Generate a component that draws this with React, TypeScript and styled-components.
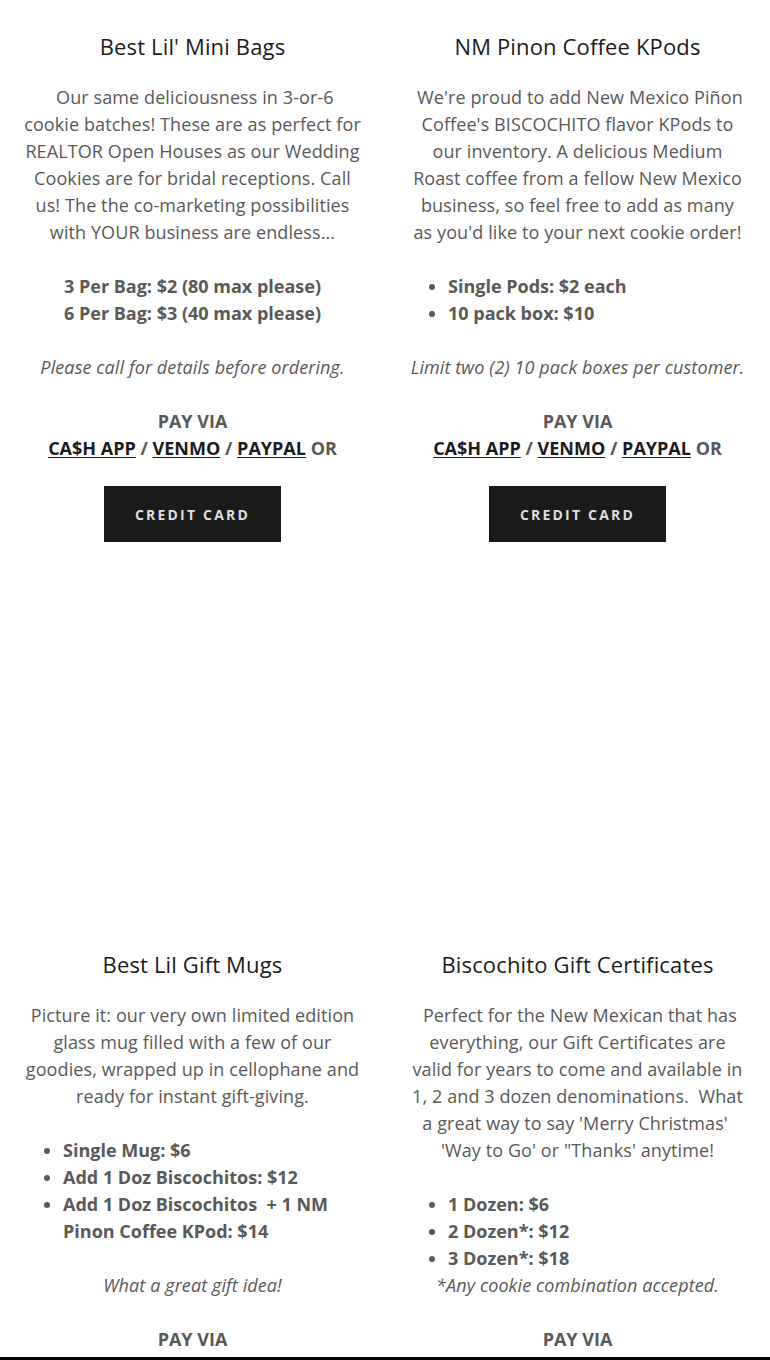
import styled, { createGlobalStyle } from "styled-components";

const GlobalStyle = createGlobalStyle`
  html, body {
    margin: 0;
    padding: 0;
    background: #fff;
  }
  body {
    font-family: "Open Sans", "Noto Sans", sans-serif;
    -webkit-font-smoothing: antialiased;
  }
`;

const Page = styled.div`
  width: 770px;
  height: 1360px;
  display: flex;
  flex-direction: column;
  overflow: hidden;
`;

const Viewport = styled.div`
  flex: 1 1 auto;
  min-height: 0;
  overflow: hidden;
`;

const Grid = styled.div`
  display: grid;
  grid-template-columns: 385px 385px;
  align-items: start;
`;

const Card = styled.section`
  display: flex;
  flex-direction: column;
  align-items: center;
  padding: 32px 20px 48px 20px;
  box-sizing: border-box;
  text-align: center;
`;

const Media = styled.div<{ $height: number }>`
  align-self: stretch;
  height: ${({ $height }) => $height}px;
  background: #fff;
`;

const Title = styled.h4`
  margin: 0;
  color: #1b1b1b;
  font-size: 22px;
  font-weight: 400;
  line-height: 28px;
  letter-spacing: 0.15px;
`;

const Body = styled.div`
  margin-top: 24px;
  color: #595959;
  font-size: 18px;
  line-height: 27px;
  letter-spacing: 0.1px;
  align-self: stretch;

  & > p {
    margin: 0 0 27px 0;
  }
  & > p:last-child {
    margin-bottom: 0;
  }
`;

const Bold = styled.p`
  font-weight: 700;
  letter-spacing: 0;
`;

const Note = styled.p`
  font-style: italic;
`;

const PriceList = styled.ul<{ $tight?: boolean }>`
  margin: 0 0 ${({ $tight }) => ($tight ? 0 : 27)}px 0;
  padding-left: 43px;
  text-align: left;
  font-weight: 700;
  letter-spacing: 0;
`;

const PayVia = styled.p`
  font-weight: 700;
  text-transform: uppercase;
  letter-spacing: 0;
`;

const PayLink = styled.a`
  color: #1b1b1b;
  text-decoration: underline;
  text-underline-offset: 2px;
`;

const Button = styled.a`
  margin-top: 24px;
  display: inline-flex;
  align-items: center;
  justify-content: center;
  width: 177px;
  height: 56px;
  box-sizing: border-box;
  background: #1b1b1b;
  color: #dedede;
  font-size: 14px;
  font-weight: 700;
  letter-spacing: 2.2px;
  text-transform: uppercase;
  text-decoration: none;
`;

const Footer = styled.div`
  height: 3px;
  flex: 0 0 3px;
  background: #000;
`;

const Pay = () => (
  <PayVia>
    Pay via
    <br />
    <PayLink href="#">CA$H APP</PayLink> / <PayLink href="#">VENMO</PayLink> /{" "}
    <PayLink href="#">PAYPAL</PayLink> OR
  </PayVia>
);

export default function App() {
  return (
    <>
      <GlobalStyle />
      <Page>
        <Viewport>
          <Grid>
            <Card>
              <Title>Best Lil' Mini Bags</Title>
              <Body>
                <p>
                  &nbsp;Our same deliciousness in 3-or-6
                  <br />
                  cookie batches! These are as perfect for
                  <br />
                  REALTOR Open Houses as our Wedding
                  <br />
                  Cookies are for bridal receptions. Call
                  <br />
                  us! The the co-marketing possibilities
                  <br />
                  with YOUR business are endless...
                </p>
                <Bold>
                  3 Per Bag: $2 (80 max please)
                  <br />6 Per Bag: $3 (40 max please)
                </Bold>
                <Note>Please call for details before ordering.</Note>
                <Pay />
              </Body>
              <Button href="#">Credit Card</Button>
            </Card>
            <Card>
              <Title>NM Pinon Coffee KPods</Title>
              <Body>
                <p>
                  &nbsp;We're proud to add New Mexico Piñon
                  <br />
                  Coffee's BISCOCHITO flavor KPods to
                  <br />
                  our inventory. A delicious Medium
                  <br />
                  Roast coffee from a fellow New Mexico
                  <br />
                  business, so feel free to add as many
                  <br />
                  as you'd like to your next cookie order!
                </p>
                <PriceList>
                  <li>Single Pods: $2 each</li>
                  <li>10 pack box: $10</li>
                </PriceList>
                <Note>Limit two (2) 10 pack boxes per customer.</Note>
                <Pay />
              </Body>
              <Button href="#">Credit Card</Button>
            </Card>
            <Card>
              <Media $height={328} />
              <Title>Best Lil Gift Mugs</Title>
              <Body>
                <p>
                  Picture it: our very own limited edition
                  <br />
                  glass mug filled with a few of our
                  <br />
                  goodies, wrapped up in cellophane and
                  <br />
                  ready for instant gift-giving.
                </p>
                <PriceList>
                  <li>Single Mug: $6</li>
                  <li>Add 1 Doz Biscochitos: $12</li>
                  <li>
                    Add 1 Doz Biscochitos&nbsp; + 1 NM
                    <br />
                    Pinon Coffee KPod: $14
                  </li>
                </PriceList>
                <Note>What a great gift idea!</Note>
                <Pay />
              </Body>
              <Button href="#">Credit Card</Button>
            </Card>
            <Card>
              <Media $height={328} />
              <Title>Biscochito Gift Certificates</Title>
              <Body>
                <p>
                  &nbsp;Perfect for the New Mexican that has
                  <br />
                  everything, our Gift Certificates are
                  <br />
                  valid for years to come and available in
                  <br />
                  1, 2 and 3 dozen denominations.&nbsp; What
                  <br />
                  a great way to say 'Merry Christmas'&nbsp;
                  <br />
                  'Way to Go' or "Thanks' anytime!
                </p>
                <PriceList $tight>
                  <li>1 Dozen: $6</li>
                  <li>2 Dozen*: $12</li>
                  <li>3 Dozen*: $18</li>
                </PriceList>
                <Note>*Any cookie combination accepted.</Note>
                <Pay />
              </Body>
              <Button href="#">Credit Card</Button>
            </Card>
          </Grid>
        </Viewport>
        <Footer />
      </Page>
    </>
  );
}
